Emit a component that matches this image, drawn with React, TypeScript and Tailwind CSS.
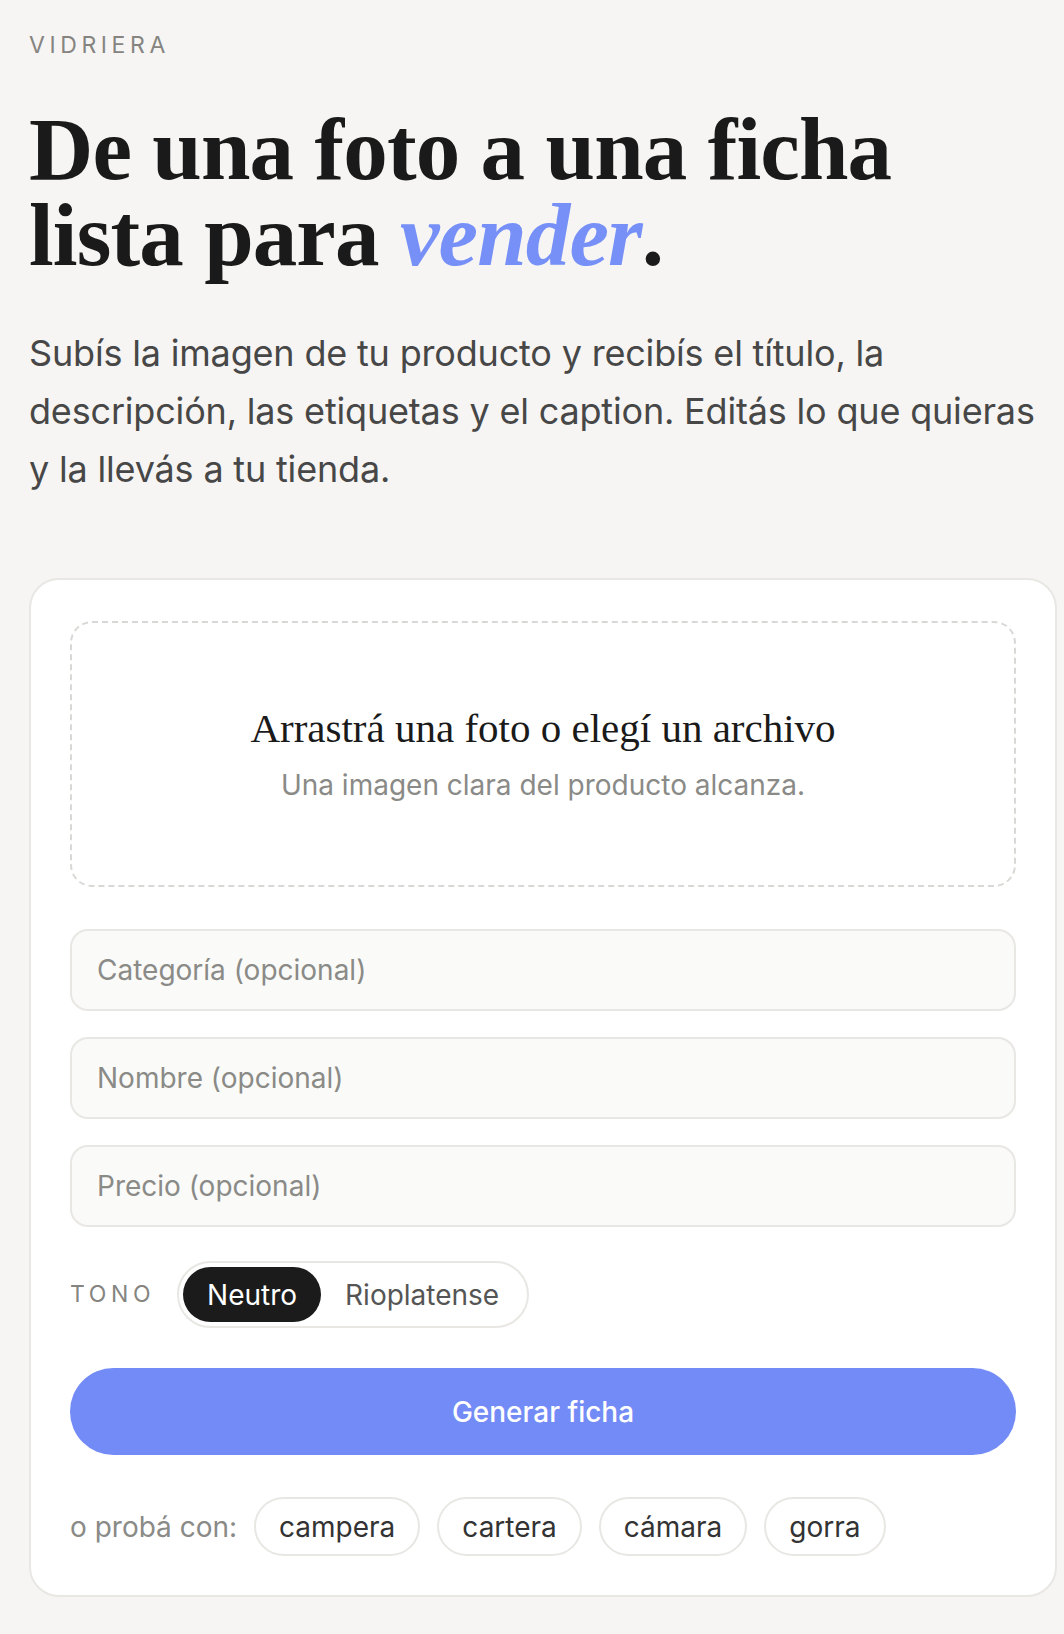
const sans = "font-['Inter','Noto_Sans',sans-serif]"
const serif = "font-['Liberation_Serif','DejaVu_Serif',serif]"

const fields = ['Categoría (opcional)', 'Nombre (opcional)', 'Precio (opcional)']
const samples = ['campera', 'cartera', 'cámara', 'gorra']

export default function App() {
  return (
    <div className={`min-h-screen bg-[#f6f5f3] ${sans} pl-[29px] pr-[7px] pt-[30px] pb-[36px]`}>
      <p className="text-[23px] leading-[30px] tracking-[0.2em] text-[#858480] uppercase">Vidriera</p>

      <h1 className={`${serif} mt-[46px] text-[89px] leading-[86px] font-bold tracking-[-0.01em] text-[#1a1a1a]`}>
        De una foto a una ficha
        <br />
        lista para <em className="text-[#7690f8]">vender</em>.
      </h1>

      <p className="mt-[46px] text-[36px] leading-[58px] tracking-[-0.005em] text-[#474747]">
        Subís la imagen de tu producto y recibís el título, la descripción, las etiquetas y el caption. Editás lo
        que quieras y la llevás a tu tienda.
      </p>

      <div className="mt-[80px] rounded-[30px] border-2 border-[#e8e7e3] bg-white px-[39px] pt-[41px] pb-[39px]">
        <div className="flex h-[266px] flex-col items-center justify-center rounded-[22px] border-2 border-dashed border-[#d9d8d5]">
          <p className={`${serif} text-[41px] leading-[46px] text-[#1a1a1a]`}>Arrastrá una foto o elegí un archivo</p>
          <p className="mt-[16px] text-[28px] leading-[36px] text-[#8a8a87]">Una imagen clara del producto alcanza.</p>
        </div>

        <div className="mt-[42px] flex flex-col gap-[26px]">
          {fields.map((f) => (
            <input
              key={f}
              placeholder={f}
              className="h-[82px] w-full rounded-[18px] border-2 border-[#e8e7e3] bg-[#fafaf9] px-[25px] text-[28px] text-[#1a1a1a] outline-none placeholder:text-[#8a8a87]"
            />
          ))}
        </div>

        <div className="mt-[34px] flex items-center gap-[22px]">
          <span className="text-[23px] tracking-[0.2em] text-[#858480]">TONO</span>
          <div className="flex items-center rounded-full border-2 border-[#e8e7e3] p-[4px] pr-[28px]">
            <button className="h-[55px] rounded-full bg-[#1b1b1b] px-[24px] text-[28px] text-white">Neutro</button>
            <button className="ml-[24px] text-[28px] text-[#555]">Rioplatense</button>
          </div>
        </div>

        <button className="mt-[40px] h-[87px] w-full rounded-full bg-[#738bf6] text-[28px] font-medium text-white">
          Generar ficha
        </button>

        <div className="mt-[42px] flex items-center gap-[17px]">
          <span className="text-[28px] text-[#8a8a87]">o probá con:</span>
          {samples.map((s) => (
            <button
              key={s}
              className="h-[59px] rounded-full border-2 border-[#e8e7e3] bg-white px-[23px] text-[28px] text-[#333]"
            >
              {s}
            </button>
          ))}
        </div>
      </div>
    </div>
  )
}
